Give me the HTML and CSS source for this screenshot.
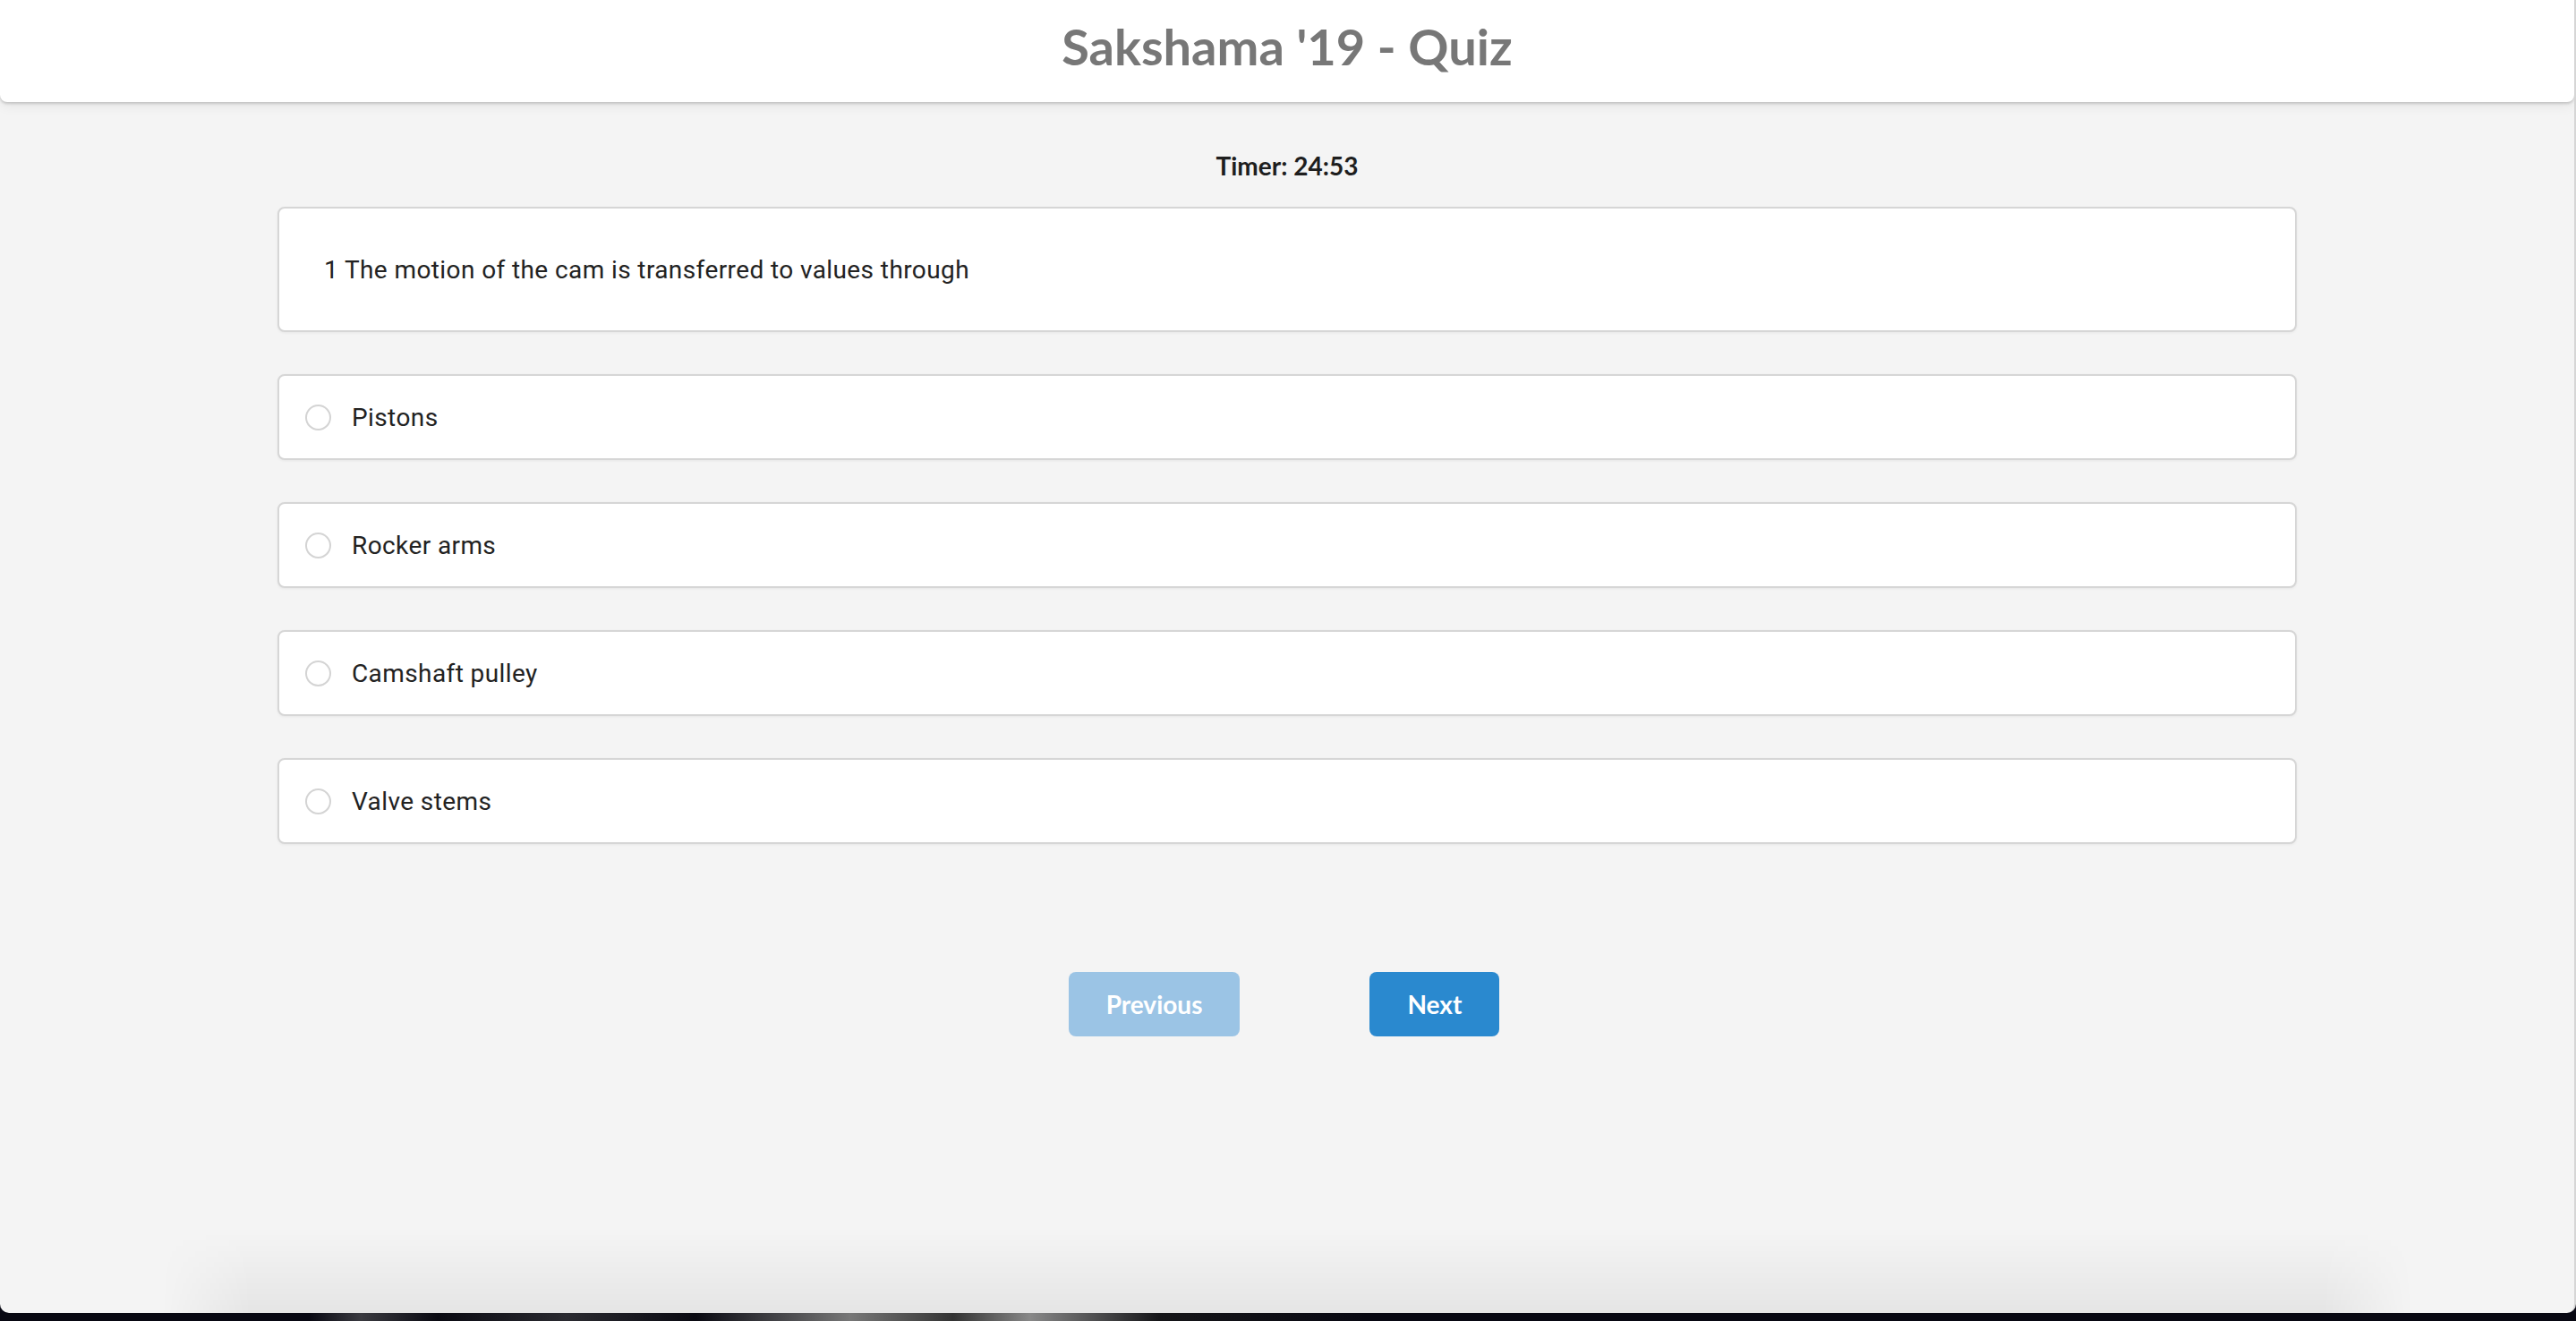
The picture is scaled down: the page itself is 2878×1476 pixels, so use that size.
FILE: index.html
```html
<!DOCTYPE html>
<html lang="en">
<head>
<meta charset="utf-8">
<title>Sakshama '19 - Quiz</title>
<link rel="stylesheet" href="styles.css">
</head>
<body>
<div class="page">
  <header class="topbar">
    <h1 class="title">Sakshama '19 - Quiz</h1>
  </header>
  <main class="quiz">
    <div class="timer">Timer: 24:53</div>
    <div class="card question">1 The motion of the cam is transferred to values through</div>
    <label class="card option"><span class="radio"></span><span class="opt-text">Pistons</span></label>
    <label class="card option"><span class="radio"></span><span class="opt-text">Rocker arms</span></label>
    <label class="card option"><span class="radio"></span><span class="opt-text">Camshaft pulley</span></label>
    <label class="card option"><span class="radio"></span><span class="opt-text">Valve stems</span></label>
    <div class="nav">
      <button class="btn btn-disabled">Previous</button>
      <button class="btn btn-primary">Next</button>
    </div>
  </main>
  <div class="shade"></div>
</div>
<div class="under"></div>
</body>
</html>
```
FILE: styles.css
```css
html, body {
  margin: 0;
  padding: 0;
}
body {
  background: #090914;
  width: 2878px;
  height: 1476px;
  overflow: hidden;
}
.page {
  height: 1467px;
  background: #f4f4f4;
  border-right: 2px solid #d6d6d6;
  border-radius: 0 0 10px 10px;
  display: flex;
  flex-direction: column;
  overflow: hidden;
  box-sizing: border-box;
}
.topbar {
  height: 114px;
  background: #ffffff;
  border-radius: 0 0 8px 8px;
  box-shadow: 0 2px 3px rgba(0,0,0,0.16), 0 4px 14px rgba(0,0,0,0.07);
  display: flex;
  justify-content: center;
  flex-shrink: 0;
  position: relative;
  z-index: 1;
}
.title {
  margin: 18px 0 0 0;
  font-family: Lato, "Open Sans", sans-serif;
  font-weight: 700;
  font-size: 56px;
  line-height: 67px;
  height: 67px;
  color: #777777;
}
.quiz {
  width: 2256px;
  margin: 0 0 0 310px;
  padding-top: 54px;
  display: flex;
  flex-direction: column;
}
.timer {
  font-family: Lato, "Open Sans", sans-serif;
  font-weight: 700;
  font-size: 28px;
  line-height: 34px;
  color: #1e1e1e;
  text-align: center;
  margin-bottom: 29px;
}
.card {
  background: #ffffff;
  border: 2px solid #d6d6d6;
  border-radius: 8px;
  box-shadow: 0 1px 3px rgba(0,0,0,0.06);
  box-sizing: border-box;
  font-family: Roboto, "Liberation Sans", sans-serif;
  font-size: 28px;
  letter-spacing: 0.4px;
  color: #222222;
  display: flex;
  align-items: center;
}
.question {
  height: 140px;
  padding-left: 50px;
  margin-bottom: 47px;
}
.option {
  height: 96px;
  padding-left: 29px;
  margin-bottom: 47px;
}
.radio {
  width: 29px;
  height: 29px;
  box-sizing: border-box;
  border: 2px solid #d4d4d4;
  border-radius: 50%;
  background: #ffffff;
  margin-right: 23px;
  flex-shrink: 0;
}
.nav {
  margin-top: 96px;
  display: flex;
  justify-content: center;
  gap: 145px;
  padding-right: 7px;
}
.btn {
  height: 72px;
  padding: 0 42px;
  border: none;
  border-radius: 8px;
  font-family: Lato, "Open Sans", sans-serif;
  font-weight: 700;
  font-size: 28px;
  color: #ffffff;
}
.btn-disabled {
  background: #9bc4e5;
}
.btn-primary {
  background: #2a89cf;
}
.shade {
  margin: auto 180px 0 180px;
  height: 90px;
  background: linear-gradient(to bottom, rgba(0,0,0,0), rgba(0,0,0,0.06));
  -webkit-mask-image: linear-gradient(to right, transparent, #000 4%, #000 96%, transparent);
  mask-image: linear-gradient(to right, transparent, #000 4%, #000 96%, transparent);
}
.under {
  height: 9px;
  background: linear-gradient(to right, #080812 0%, #080812 12%, #3a3a40 14%, #0a0a12 17%, #2a2a30 22%, #0a0a12 27%, #777 33%, #333 37%, #888 40%, #151518 45%, #080812 53%, #080812 100%);
}
```
